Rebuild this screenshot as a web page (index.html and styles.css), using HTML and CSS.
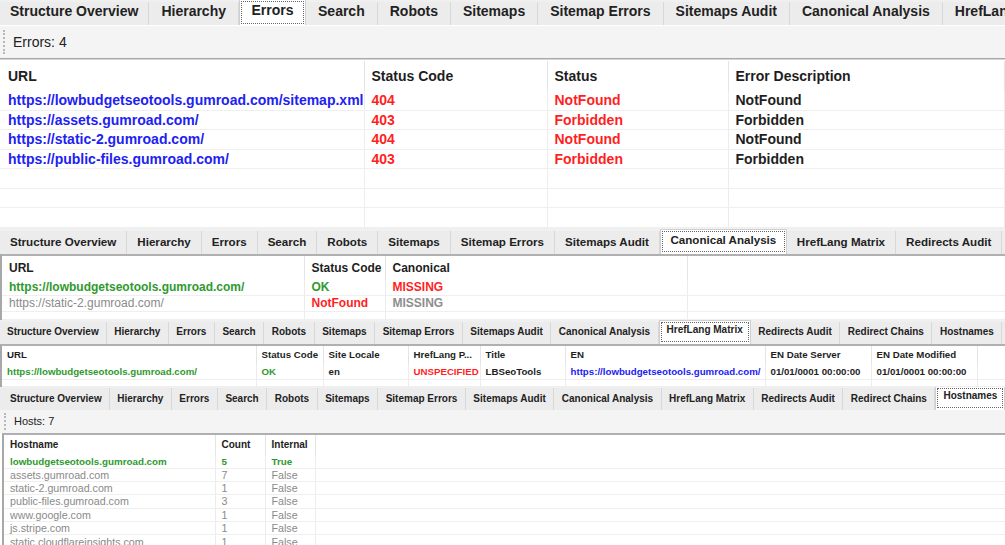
FILE: index.html
```html
<!DOCTYPE html>
<html lang="en">
  <head>
    <meta charset="UTF-8" />
    <meta name="viewport" content="width=device-width, initial-scale=1.0" />
    <title>SEO Crawl Report</title>
    <link rel="stylesheet" href="styles.css">
  </head>
  <body>
    <!-- Errors tab -->
    <div class="panel p1">
      <div class="tabs">
        <span class="tab">Structure Overview</span>
        <span class="tab">Hierarchy</span>
        <span class="tab active"><span class="focus">Errors</span></span>
        <span class="tab">Search</span>
        <span class="tab">Robots</span>
        <span class="tab">Sitemaps</span>
        <span class="tab">Sitemap Errors</span>
        <span class="tab">Sitemaps Audit</span>
        <span class="tab">Canonical Analysis</span>
        <span class="tab">HrefLang Matrix</span>
      </div>
      <div class="toolbar"><span class="grip"></span>Errors: 4</div>
      <div class="grid-wrap">
        <table class="grid">
          <colgroup>
            <col style="width:364px"><col style="width:183px"><col style="width:181px"><col>
          </colgroup>
          <thead>
            <tr><th>URL</th><th>Status Code</th><th>Status</th><th>Error Description</th></tr>
          </thead>
          <tbody>
            <tr><td class="blue">https://lowbudgetseotools.gumroad.com/sitemap.xml</td><td class="red">404</td><td class="red">NotFound</td><td>NotFound</td></tr>
            <tr><td class="blue">https://assets.gumroad.com/</td><td class="red">403</td><td class="red">Forbidden</td><td>Forbidden</td></tr>
            <tr><td class="blue">https://static-2.gumroad.com/</td><td class="red">404</td><td class="red">NotFound</td><td>NotFound</td></tr>
            <tr><td class="blue">https://public-files.gumroad.com/</td><td class="red">403</td><td class="red">Forbidden</td><td>Forbidden</td></tr>
            <tr><td></td><td></td><td></td><td></td></tr>
            <tr><td></td><td></td><td></td><td></td></tr>
            <tr><td></td><td></td><td></td><td></td></tr>
          </tbody>
        </table>
      </div>
    </div>

    <!-- Canonical Analysis tab -->
    <div class="panel p2">
      <div class="tabs">
        <span class="tab">Structure Overview</span>
        <span class="tab">Hierarchy</span>
        <span class="tab">Errors</span>
        <span class="tab">Search</span>
        <span class="tab">Robots</span>
        <span class="tab">Sitemaps</span>
        <span class="tab">Sitemap Errors</span>
        <span class="tab">Sitemaps Audit</span>
        <span class="tab active"><span class="focus">Canonical Analysis</span></span>
        <span class="tab">HrefLang Matrix</span>
        <span class="tab">Redirects Audit</span>
        <span class="tab">Redirect Chains</span>
      </div>
      <div class="grid-wrap framed">
        <table class="grid">
          <colgroup>
            <col style="width:302px"><col style="width:81px"><col style="width:302px"><col>
          </colgroup>
          <thead>
            <tr><th>URL</th><th>Status Code</th><th>Canonical</th><th class="blank"></th></tr>
          </thead>
          <tbody>
            <tr><td class="green">https://lowbudgetseotools.gumroad.com/</td><td class="green">OK</td><td class="red">MISSING</td><td class="blank"></td></tr>
            <tr class="muted"><td>https://static-2.gumroad.com/</td><td class="red">NotFound</td><td class="gray-b">MISSING</td><td class="blank"></td></tr>
            <tr class="tail"><td></td><td></td><td></td><td class="blank"></td></tr>
          </tbody>
        </table>
      </div>
    </div>

    <!-- HrefLang Matrix tab -->
    <div class="panel p3">
      <div class="tabs">
        <span class="tab">Structure Overview</span>
        <span class="tab">Hierarchy</span>
        <span class="tab">Errors</span>
        <span class="tab">Search</span>
        <span class="tab">Robots</span>
        <span class="tab">Sitemaps</span>
        <span class="tab">Sitemap Errors</span>
        <span class="tab">Sitemaps Audit</span>
        <span class="tab">Canonical Analysis</span>
        <span class="tab active"><span class="focus">HrefLang Matrix</span></span>
        <span class="tab">Redirects Audit</span>
        <span class="tab">Redirect Chains</span>
        <span class="tab">Hostnames</span>
        <span class="tab">More</span>
      </div>
      <div class="grid-wrap framed">
        <table class="grid">
          <colgroup>
            <col style="width:254px"><col style="width:67px"><col style="width:85px"><col style="width:72px">
            <col style="width:85px"><col style="width:200px"><col style="width:106px"><col style="width:106px"><col>
          </colgroup>
          <thead>
            <tr><th>URL</th><th>Status Code</th><th>Site Locale</th><th>HrefLang P...</th><th>Title</th><th>EN</th><th>EN Date Server</th><th>EN Date Modified</th><th class="blank"></th></tr>
          </thead>
          <tbody>
            <tr><td class="green">https://lowbudgetseotools.gumroad.com/</td><td class="green">OK</td><td>en</td><td class="red">UNSPECIFIED</td><td>LBSeoTools</td><td class="blue">https://lowbudgetseotools.gumroad.com/</td><td>01/01/0001 00:00:00</td><td>01/01/0001 00:00:00</td><td class="blank"></td></tr>
            <tr class="tail"><td></td><td></td><td></td><td></td><td></td><td></td><td></td><td></td><td class="blank"></td></tr>
          </tbody>
        </table>
      </div>
    </div>

    <!-- Hostnames tab -->
    <div class="panel p4">
      <div class="tabs">
        <span class="tab">Structure Overview</span>
        <span class="tab">Hierarchy</span>
        <span class="tab">Errors</span>
        <span class="tab">Search</span>
        <span class="tab">Robots</span>
        <span class="tab">Sitemaps</span>
        <span class="tab">Sitemap Errors</span>
        <span class="tab">Sitemaps Audit</span>
        <span class="tab">Canonical Analysis</span>
        <span class="tab">HrefLang Matrix</span>
        <span class="tab">Redirects Audit</span>
        <span class="tab">Redirect Chains</span>
        <span class="tab active"><span class="focus">Hostnames</span></span>
        <span class="tab">More</span>
      </div>
      <div class="toolbar"><span class="grip"></span>Hosts: 7</div>
      <div class="grid-wrap framed">
        <table class="grid">
          <colgroup>
            <col style="width:211px"><col style="width:50px"><col style="width:50px"><col>
          </colgroup>
          <thead>
            <tr><th>Hostname</th><th>Count</th><th>Internal</th><th class="blank"></th></tr>
          </thead>
          <tbody>
            <tr class="first"><td class="green">lowbudgetseotools.gumroad.com</td><td class="green">5</td><td class="green">True</td><td class="blank"></td></tr>
            <tr class="muted"><td>assets.gumroad.com</td><td>7</td><td>False</td><td class="blank"></td></tr>
            <tr class="muted"><td>static-2.gumroad.com</td><td>1</td><td>False</td><td class="blank"></td></tr>
            <tr class="muted"><td>public-files.gumroad.com</td><td>3</td><td>False</td><td class="blank"></td></tr>
            <tr class="muted"><td>www.google.com</td><td>1</td><td>False</td><td class="blank"></td></tr>
            <tr class="muted"><td>js.stripe.com</td><td>1</td><td>False</td><td class="blank"></td></tr>
            <tr class="muted"><td>static.cloudflareinsights.com</td><td>1</td><td>False</td><td class="blank"></td></tr>
          </tbody>
        </table>
      </div>
    </div>
  </body>
</html>
```

FILE: styles.css
```css
/* page */
body {
  margin: 0;
  width: 1005px;
  height: 545px;
  overflow: hidden;
  background: #fff;
  font-family: "Liberation Sans", Arial, sans-serif;
  color: #1e1e1e;
}

.panel {
  overflow: hidden;
}

/* tab strip */
.tabs {
  display: flex;
  align-items: flex-end;
  background: #f0f0f0;
  white-space: nowrap;
  overflow: hidden;
}

.tab {
  flex: none;
  background: #ececec;
  border-right: 1px solid #d8d8d8;
  color: #222;
  font-weight: bold;
  text-align: center;
}

/* the selected tab is white, taller and sits over the strip edge */
.tabs .tab.active {
  position: relative;
  z-index: 1;
  background: #fff;
  border: 1px solid #d0d0d0;
  border-bottom: none;
  margin-bottom: -1px;
  padding: 1px 1px 0 1px;
}

.tab.active .focus {
  display: block;
  border: 1px dotted #666;
}

/* toolbar under the tabs */
.toolbar {
  display: flex;
  align-items: center;
  background: #f4f4f4;
  color: #222;
}

.grip {
  width: 2px;
  border-left: 2px dotted #b8b8b8;
  align-self: stretch;
}

/* data grids */
.grid-wrap {
  background: #fff;
}

.framed {
  border-top: 2px solid #b0b0b0;
  border-left: 2px solid #a8a8a8;
}

.grid {
  width: 100%;
  border-collapse: collapse;
  table-layout: fixed;
}

.grid th,
.grid td {
  white-space: nowrap;
  overflow: hidden;
  text-align: left;
  vertical-align: middle;
  font-weight: bold;
  border-right: 1px solid #ececec;
  padding-top: 0;
  padding-bottom: 0;
}

.grid td {
  border-bottom: 1px solid #efefef;
}

.grid th {
  color: #1e1e1e;
  border-right-color: #e4e4e4;
}

.grid .blank {
  border-right: none;
}

.blue { color: #2121f2; }
.red { color: #ff1f1f; }
.green { color: #2e9a2e; }
.gray-b { color: #8e8e8e; }

.muted td {
  color: #8a8a8a;
  font-weight: normal;
}

.muted td.red { color: #ff1f1f; font-weight: bold; }
.muted td.gray-b { color: #8e8e8e; font-weight: bold; }

/* panel 1: errors */
.p1 .tabs { height: 25px; }
.p1 .tab {
  font-size: 14px;
  height: 23px;
  line-height: 19px;
  padding: 0 12px;
}
.p1 .tab:first-child { padding: 0 10px; }
.p1 .tabs .tab.active { height: 25px; }
.p1 .tab.active .focus { height: 21px; line-height: 17px; padding: 0 9.5px; }
.p1 .toolbar {
  height: 32px;
  font-size: 14px;
  margin-top: 1px;
  border-bottom: 1px solid #a8a8a8;
  box-shadow: 0 1px 0 #d6d6d6;
}
.p1 .grip { margin: 4px 6px 4px 3px; }
.p1 .grid-wrap { margin-top: 2px; }
.p1 .grid { font-size: 14px; }
.p1 .grid th { height: 30px; padding-left: 7px; padding-right: 7px; }
.p1 .grid th:first-child { padding-left: 8px; }
.p1 .grid td { height: 18.5px; padding-left: 7px; padding-right: 4px; }
.p1 .grid td:first-child { padding-left: 8px; padding-right: 2px; }

/* panel 2: canonical analysis */
.p2 .tabs { height: 26px; }
.p2 .tab {
  font-size: 11.6px;
  height: 23px;
  line-height: 22px;
  padding: 0 10px;
}
.p2 .tabs .tab.active { height: 24px; }
.p2 .tab.active .focus { height: 19px; line-height: 15px; padding: 0 7.5px; }
.p2 .grid { font-size: 12px; }
.p2 .grid th { height: 24px; padding-left: 7px; padding-right: 6px; }
.p2 .grid td { height: 15px; padding-left: 7px; padding-right: 6px; }
.p2 .grid .tail td { height: 7px; }

/* panel 3: hreflang matrix */
.p3 .tabs { height: 24px; }
.p3 .tab {
  font-size: 10px;
  height: 22px;
  line-height: 20px;
  padding: 0 7.5px;
}
.p3 .tab:first-child { padding: 0 7px; }
.p3 .tabs .tab.active { height: 23px; }
.p3 .tab.active .focus { height: 18px; line-height: 14px; padding: 0 5px; }
.p3 .grid { font-size: 9.7px; }
.p3 .grid th { height: 18px; padding-left: 5px; padding-right: 3px; }
.p3 .grid td { height: 15px; padding-left: 5px; padding-right: 3px; }
.p3 .grid .tail td { height: 6px; }

/* panel 4: hostnames */
.p4 .tabs { height: 23px; }
.p4 .tab {
  font-size: 10px;
  height: 22px;
  line-height: 21px;
  padding: 0 7.5px;
}
.p4 .tab:first-child { padding: 0 7px 0 10px; }
.p4 .tabs .tab.active { height: 23px; }
.p4 .tab.active .focus { height: 18px; line-height: 14px; padding: 0 5px; }
.p4 .toolbar {
  height: 23px;
  font-size: 11px;
}
.p4 .grip { margin: 3px 6px 3px 4px; }
.p4 .grid-wrap { margin-left: 2px; }
.p4 .grid { font-size: 10px; }
.p4 .grid th { height: 20px; padding-left: 6px; padding-right: 4px; }
.p4 .grid td { height: 12.4px; padding-left: 6px; padding-right: 4px; }
.p4 .grid .first td { height: 13px; font-size: 9.8px; }
.p4 .grid .muted td { font-size: 10.7px; }
```
